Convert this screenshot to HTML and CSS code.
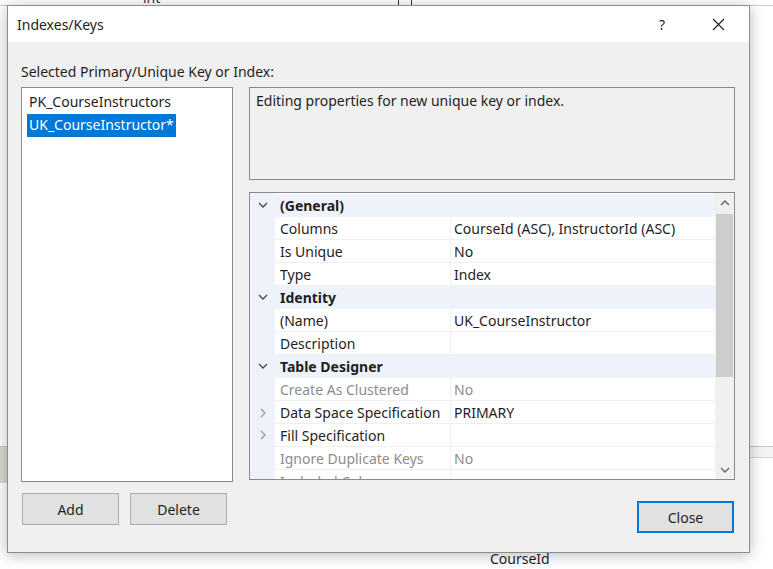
FILE: index.html
```html
<!DOCTYPE html>
<html>
<head>
<meta charset="utf-8">
<link rel="stylesheet" href="styles.css">
</head>
<body>
<div class="desktop">
  <div class="bg-top"><span class="bg-int">int</span><span class="bg-box"></span></div>
  <div class="bg-left"></div>
  <div class="bg-right"></div>
  <div class="bg-bottom">CourseId</div>
  <div class="dialog">
    <div class="titlebar">
      <span class="title">Indexes/Keys</span>
      <span class="help">?</span>
      <svg class="close-x" width="13" height="13" viewBox="0 0 13 13"><path d="M1 1L12 12M12 1L1 12" stroke="#222" stroke-width="1.2" fill="none"/></svg>
    </div>
    <div class="body">
      <div class="label">Selected Primary/Unique Key or Index:</div>
      <div class="main">
        <div class="left">
          <div class="listbox">
            <div class="item">PK_CourseInstructors</div>
            <div class="item sel">UK_CourseInstructor*</div>
          </div>
          <div class="btnrow">
            <button class="btn">Add</button>
            <button class="btn">Delete</button>
          </div>
        </div>
        <div class="right">
          <div class="desc">Editing properties for new unique key or index.</div>
          <div class="pgrid">
            <div class="rows">
              <div class="row cat"><span class="gut"><svg width="10" height="10" viewBox="0 0 10 10"><path d="M1 3L5 7L9 3" stroke="#444" stroke-width="1.3" fill="none"/></svg></span><span class="name">(General)</span></div>
              <div class="row"><span class="gut"></span><span class="name">Columns</span><span class="val">CourseId (ASC), InstructorId (ASC)</span></div>
              <div class="row"><span class="gut"></span><span class="name">Is Unique</span><span class="val">No</span></div>
              <div class="row"><span class="gut"></span><span class="name">Type</span><span class="val">Index</span></div>
              <div class="row cat"><span class="gut"><svg width="10" height="10" viewBox="0 0 10 10"><path d="M1 3L5 7L9 3" stroke="#444" stroke-width="1.3" fill="none"/></svg></span><span class="name">Identity</span></div>
              <div class="row"><span class="gut"></span><span class="name">(Name)</span><span class="val">UK_CourseInstructor</span></div>
              <div class="row"><span class="gut"></span><span class="name">Description</span><span class="val"></span></div>
              <div class="row cat"><span class="gut"><svg width="10" height="10" viewBox="0 0 10 10"><path d="M1 3L5 7L9 3" stroke="#444" stroke-width="1.3" fill="none"/></svg></span><span class="name">Table Designer</span></div>
              <div class="row dis"><span class="gut"></span><span class="name">Create As Clustered</span><span class="val">No</span></div>
              <div class="row"><span class="gut"><svg width="10" height="10" viewBox="0 0 10 10"><path d="M3 1L7 5L3 9" stroke="#999" stroke-width="1.3" fill="none"/></svg></span><span class="name">Data Space Specification</span><span class="val">PRIMARY</span></div>
              <div class="row"><span class="gut"><svg width="10" height="10" viewBox="0 0 10 10"><path d="M3 1L7 5L3 9" stroke="#999" stroke-width="1.3" fill="none"/></svg></span><span class="name">Fill Specification</span><span class="val"></span></div>
              <div class="row dis"><span class="gut"></span><span class="name">Ignore Duplicate Keys</span><span class="val">No</span></div>
              <div class="row dis"><span class="gut"></span><span class="name">Included Columns</span><span class="val"></span></div>
            </div>
            <div class="scroll">
              <div class="arrow"><svg width="10" height="10" viewBox="0 0 10 10"><path d="M1 7L5 3L9 7" stroke="#606060" stroke-width="1.3" fill="none"/></svg></div>
              <div class="thumb"></div>
              <div class="track"></div>
              <div class="arrow"><svg width="10" height="10" viewBox="0 0 10 10"><path d="M1 3L5 7L9 3" stroke="#606060" stroke-width="1.3" fill="none"/></svg></div>
            </div>
          </div>
          <div class="closerow"><button class="btn primary">Close</button></div>
        </div>
      </div>
    </div>
  </div>
</div>
</body>
</html>
```

FILE: styles.css
```css
html, body {
  margin: 0;
  padding: 0;
  background: #ffffff;
}
body {
  font-family: "Noto Sans", "Open Sans", sans-serif;
  font-size: 14px;
  color: #1e1e1e;
}
.desktop {
  position: relative;
  width: 773px;
  height: 569px;
  overflow: hidden;
  background: #ffffff;
}
.bg-top {
  position: absolute;
  left: 0;
  top: 0;
  width: 773px;
  height: 5px;
  border-bottom: 1px solid #d0d0d0;
}
.bg-int {
  position: absolute;
  left: 143px;
  top: -12px;
  font-size: 14px;
  color: #333;
}
.bg-box {
  position: absolute;
  left: 398px;
  top: -2px;
  width: 12px;
  height: 6px;
  border: 1px solid #333;
  background: #fff;
}
.bg-left {
  position: absolute;
  left: 0;
  top: 446px;
  width: 7px;
  height: 36px;
  background: #dcdad2;
  border-top: 1px solid #c8c8c8;
}
.bg-right {
  position: absolute;
  left: 750px;
  top: 446px;
  width: 23px;
  height: 10px;
  border-top: 1px solid #c8c8c8;
  border-bottom: 1px solid #d8d8d8;
  background: #f4f4f4;
}
.bg-bottom {
  position: absolute;
  left: 490px;
  top: 549px;
  font-size: 14px;
  color: #1e1e1e;
}
.dialog {
  position: absolute;
  left: 7px;
  top: 5px;
  width: 741px;
  height: 546px;
  border: 1px solid #8c8c8c;
  background: #f0f0f0;
  box-shadow: 0 2px 14px rgba(0, 0, 0, 0.28);
  display: flex;
  flex-direction: column;
}
.titlebar {
  height: 36px;
  background: #ffffff;
  display: flex;
  align-items: center;
  padding-left: 9px;
}
.title {
  flex: 1;
  font-size: 14px;
}
.help {
  font-size: 14px;
  margin-right: 47px;
}
.close-x {
  margin-right: 24px;
}
.body {
  padding: 20px 14px 0 13px;
  flex: 1;
  display: flex;
  flex-direction: column;
}
.label {
  height: 20px;
  line-height: 20px;
  margin-bottom: 5px;
}
.main {
  display: flex;
  gap: 16px;
}
.left {
  width: 212px;
  display: flex;
  flex-direction: column;
}
.listbox {
  height: 395px;
  box-sizing: border-box;
  border: 1px solid #8a8a8a;
  background: #ffffff;
  padding: 3px 5px;
}
.item {
  height: 23px;
  line-height: 22px;
  padding: 0 2px;
  display: inline-block;
}
.item.sel {
  background: #0078d7;
  color: #ffffff;
}
.btnrow {
  display: flex;
  gap: 11px;
  margin-top: 11px;
  padding-left: 1px;
}
.btn {
  font-family: inherit;
  font-size: 14px;
  color: #1e1e1e;
  width: 97px;
  height: 32px;
  background: #e1e1e1;
  border: 1px solid #adadad;
  padding: 0;
}
.btn.primary {
  border: 2px solid #0078d7;
}
.right {
  width: 486px;
  display: flex;
  flex-direction: column;
}
.desc {
  height: 93px;
  box-sizing: border-box;
  border: 1px solid #8a8a8a;
  padding: 3px 6px;
  line-height: 20px;
}
.pgrid {
  margin-top: 12px;
  height: 288px;
  box-sizing: border-box;
  border: 1px solid #8a8a8a;
  background: #ffffff;
  display: flex;
  overflow: hidden;
}
.rows {
  flex: 1;
  display: flex;
  flex-direction: column;
  overflow: hidden;
  padding-top: 1px;
  background: linear-gradient(to right, #eef2fa 25px, #ffffff 25px);
}
.row {
  flex: none;
  height: 23px;
  display: grid;
  grid-template-columns: 25px 175px 1fr;
  line-height: 24px;
  border-bottom: 1px solid #f0f0f0;
  box-sizing: border-box;
}
.gut {
  background: #eef2fa;
  display: flex;
  align-items: center;
  justify-content: center;
}
.name {
  padding-left: 5px;
  white-space: nowrap;
  overflow: hidden;
}
.val {
  padding-left: 3px;
  border-left: 1px solid #f0f0f0;
  white-space: nowrap;
}
.row.cat {
  background: #eef2fa;
  border-bottom-color: #eef2fa;
}
.row.cat .name {
  font-weight: bold;
  grid-column: 2 / 4;
}
.row.dis {
  color: #8c8c8c;
}
.scroll {
  width: 19px;
  background: #f0f0f0;
  display: flex;
  flex-direction: column;
}
.arrow {
  height: 19px;
  display: flex;
  align-items: center;
  justify-content: center;
}
.thumb {
  height: 163px;
  margin: 2px 1px 0;
  background: #cdcdcd;
}
.track {
  flex: 1;
}
.closerow {
  display: flex;
  justify-content: flex-end;
  margin-top: 21px;
  padding-right: 1px;
}
```
